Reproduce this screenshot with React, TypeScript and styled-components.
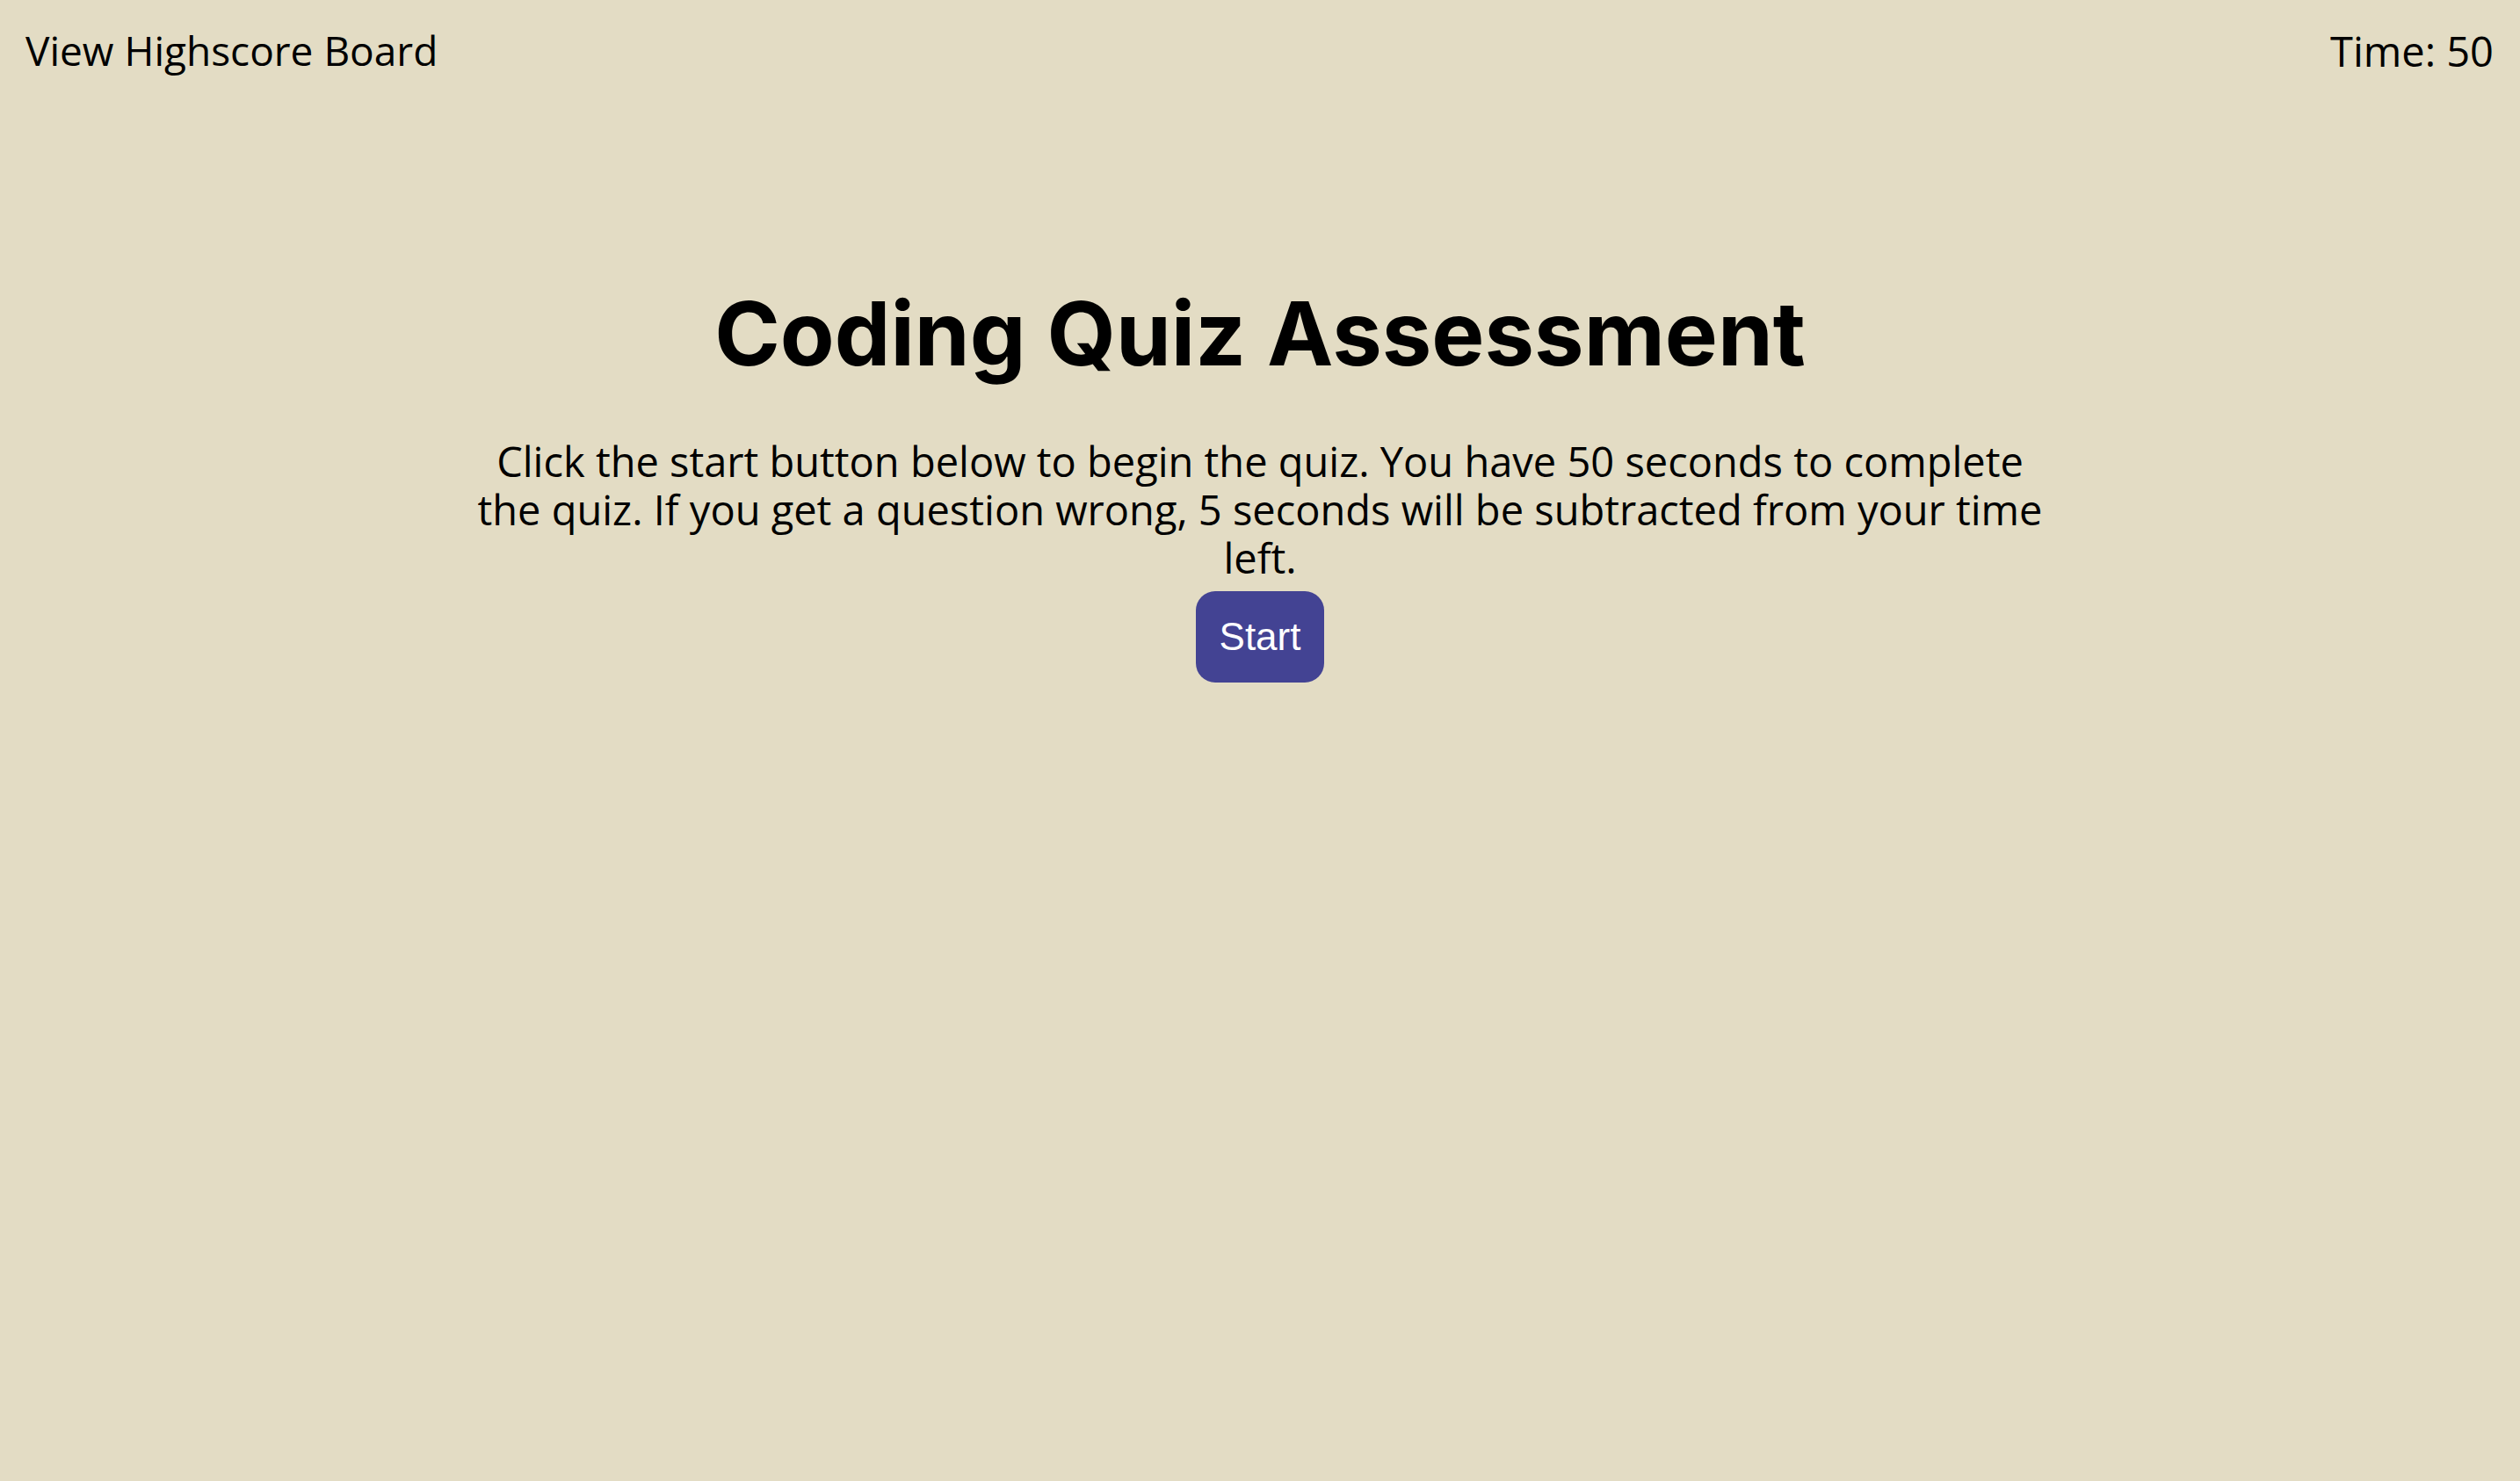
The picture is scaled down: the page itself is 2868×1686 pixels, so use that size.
import React from "react";
import styled, { createGlobalStyle } from "styled-components";

const GlobalStyle = createGlobalStyle`
  html, body {
    margin: 0;
    padding: 0;
    background: #e3dcc4;
    min-height: 100%;
  }
  body {
    font-family: "Open Sans", "Liberation Sans", sans-serif;
    color: #000;
  }
`;

const Page = styled.div`
  min-height: 1686px;
  background: #e3dcc4;
  display: flex;
  flex-direction: column;
`;

const TopBar = styled.header`
  display: flex;
  justify-content: space-between;
  align-items: flex-start;
  padding: 26px 30px 0 29px;
`;

const TopLink = styled.a`
  font-family: "Open Sans", sans-serif;
  font-size: 46px;
  color: #000;
  text-decoration: none;
  cursor: pointer;
`;

const Timer = styled.div`
  font-family: "Open Sans", sans-serif;
  font-size: 47px;
`;

const Main = styled.main`
  display: flex;
  flex-direction: column;
  align-items: center;
  padding-top: 228px;
`;

const Title = styled.h1`
  margin: 0 0 58px;
  font-family: Inter, "Open Sans", sans-serif;
  font-weight: 700;
  font-size: 101px;
  text-align: center;
`;

const Intro = styled.p`
  margin: 0 0 10px;
  width: 1800px;
  font-family: "Open Sans", sans-serif;
  font-size: 47px;
  line-height: 55px;
  text-align: center;
`;

const StartButton = styled.button`
  font-family: "Liberation Sans", Arial, sans-serif;
  font-size: 44px;
  color: #fff;
  background: #434393;
  border: none;
  border-radius: 22px;
  padding: 27px 27px;
  cursor: pointer;
`;

export default function App() {
  return (
    <Page>
      <GlobalStyle />
      <TopBar>
        <TopLink>View Highscore Board</TopLink>
        <Timer>Time: 50</Timer>
      </TopBar>
      <Main>
        <Title>Coding Quiz Assessment</Title>
        <Intro>
          Click the start button below to begin the quiz. You have 50 seconds to complete the quiz. If you get a question wrong, 5 seconds will be subtracted from your time left.
        </Intro>
        <StartButton>Start</StartButton>
      </Main>
    </Page>
  );
}
